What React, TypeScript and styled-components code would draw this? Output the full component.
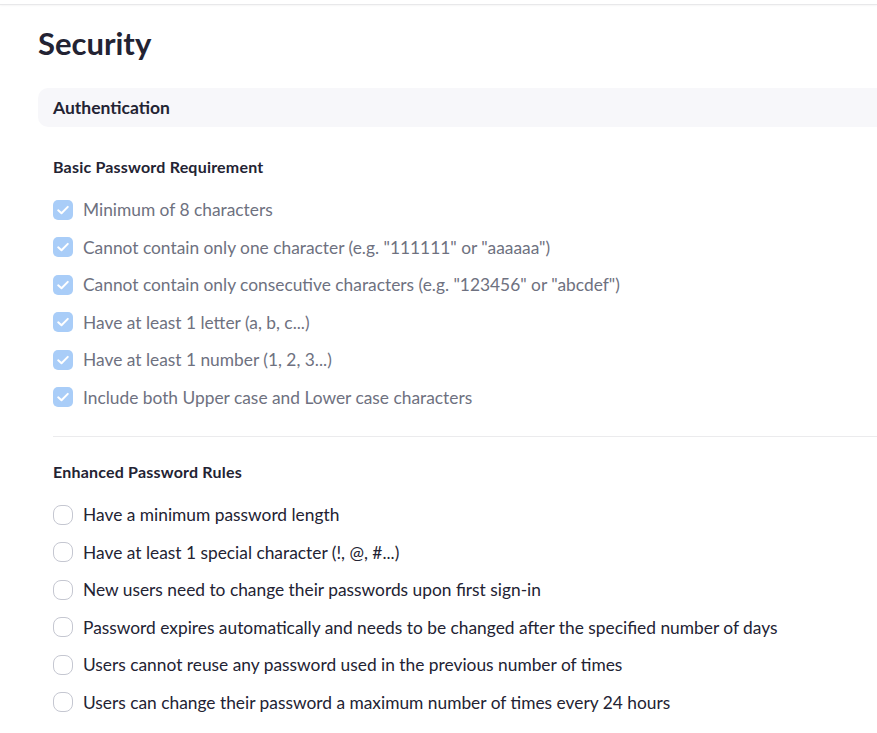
import React from 'react'
import styled, { createGlobalStyle } from 'styled-components'

const GlobalStyle = createGlobalStyle`
  html, body {
    margin: 0;
    padding: 0;
    background: #ffffff;
    font-family: Lato, "Open Sans", "Liberation Sans", sans-serif;
    color: #232333;
    overflow: hidden;
  }
`

const TopEdge = styled.div`
  height: 4px;
  border-bottom: 1px solid #e8e8ea;
  box-shadow: 0 1px 2px rgba(0, 0, 0, 0.04);
`

const Page = styled.div`
  padding-left: 38px;
`

const Title = styled.h1`
  margin: 20px 0 0;
  font-size: 31px;
  line-height: 36px;
  font-weight: 700;
  color: #232333;
`

const SectionBar = styled.div`
  margin-top: 27px;
  margin-right: -40px;
  height: 39px;
  display: flex;
  align-items: center;
  padding-left: 15px;
  background: #f7f7fa;
  border-radius: 10px 0 0 10px;
  font-size: 17.5px;
  font-weight: 700;
  color: #232333;
`

const Body = styled.div`
  padding-left: 15px;
`

const GroupTitle = styled.div<{ $top: number }>`
  margin-top: ${(p) => p.$top}px;
  font-size: 16px;
  line-height: 20px;
  font-weight: 700;
  letter-spacing: 0.2px;
  color: #232333;
`

const List = styled.ul`
  list-style: none;
  margin: 14px 0 0;
  padding: 0;
`

const Row = styled.li<{ $done: boolean }>`
  height: 37.5px;
  display: flex;
  align-items: center;
  gap: 10px;
  font-size: 17.35px;
  color: ${(p) => (p.$done ? '#6e7180' : '#232333')};
`

const Box = styled.span<{ $done: boolean }>`
  flex: none;
  box-sizing: border-box;
  width: 20px;
  height: 20px;
  display: inline-flex;
  align-items: center;
  justify-content: center;
  border-radius: ${(p) => (p.$done ? '5px' : '8px')};
  background: ${(p) => (p.$done ? '#a9cdf8' : '#ffffff')};
  border: ${(p) => (p.$done ? 'none' : '1px solid #c5c7d1')};
`

const Divider = styled.hr`
  margin: 20px -40px 0 0;
  border: none;
  border-top: 1px solid #ebebed;
`

const Check = () => (
  <svg width="14" height="14" viewBox="0 0 14 14" fill="none">
    <path d="M2.2 7.3 L5.5 10.3 L11.8 3.9" stroke="#ffffff" strokeWidth="2" strokeLinecap="round" strokeLinejoin="round" />
  </svg>
)

const basicRules = [
  'Minimum of 8 characters',
  'Cannot contain only one character (e.g. "111111" or "aaaaaa")',
  'Cannot contain only consecutive characters (e.g. "123456" or "abcdef")',
  'Have at least 1 letter (a, b, c...)',
  'Have at least 1 number (1, 2, 3...)',
  'Include both Upper case and Lower case characters',
]

const enhancedRules = [
  'Have a minimum password length',
  'Have at least 1 special character (!, @, #...)',
  'New users need to change their passwords upon first sign-in',
  'Password expires automatically and needs to be changed after the specified number of days',
  'Users cannot reuse any password used in the previous number of times',
  'Users can change their password a maximum number of times every 24 hours',
]

const RuleList: React.FC<{ items: string[]; done: boolean }> = ({ items, done }) => (
  <List>
    {items.map((text) => (
      <Row key={text} $done={done}>
        <Box $done={done}>{done && <Check />}</Box>
        <span>{text}</span>
      </Row>
    ))}
  </List>
)

export default function App() {
  return (
    <>
      <GlobalStyle />
      <TopEdge />
      <Page>
        <Title>Security</Title>
        <SectionBar>Authentication</SectionBar>
        <Body>
          <GroupTitle $top={30}>Basic Password Requirement</GroupTitle>
          <RuleList items={basicRules} done />
          <Divider />
          <GroupTitle $top={25}>Enhanced Password Rules</GroupTitle>
          <RuleList items={enhancedRules} done={false} />
        </Body>
      </Page>
    </>
  )
}
